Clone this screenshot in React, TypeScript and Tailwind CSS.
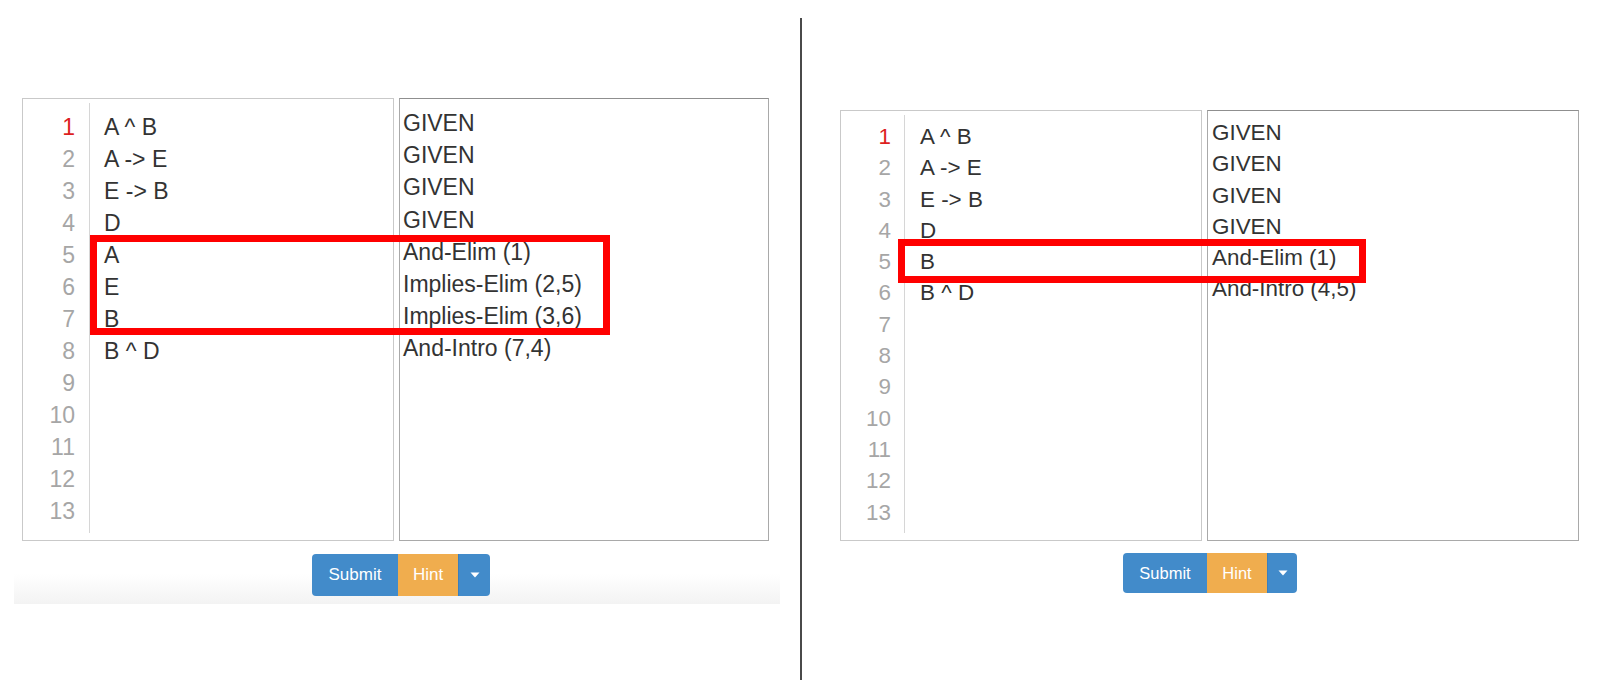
import React from 'react';

type Side = {
  formulas: string[];
  reasons: string[];
};

const leftProof: Side = {
  formulas: ['A ^ B', 'A -> E', 'E -> B', 'D', 'A', 'E', 'B', 'B ^ D'],
  reasons: ['GIVEN', 'GIVEN', 'GIVEN', 'GIVEN', 'And-Elim (1)', 'Implies-Elim (2,5)', 'Implies-Elim (3,6)', 'And-Intro (7,4)'],
};

const rightProof: Side = {
  formulas: ['A ^ B', 'A -> E', 'E -> B', 'D', 'B', 'B ^ D'],
  reasons: ['GIVEN', 'GIVEN', 'GIVEN', 'GIVEN', 'And-Elim (1)', 'And-Intro (4,5)'],
};

const lineNumbers = Array.from({ length: 13 }, (_, i) => i + 1);

const Caret = () => (
  <svg width="10" height="6" viewBox="0 0 10 6">
    <path d="M0.5 0.5 L9.5 0.5 L5 5.5 Z" fill="#fff" />
  </svg>
);

const Buttons = ({ big }: { big: boolean }) => (
  <div
    className={`flex overflow-hidden rounded-[4px] text-white font-['Liberation_Sans',Arial,sans-serif] ${
      big ? 'h-[42px] text-[17px]' : 'h-[40px] text-[16.5px]'
    }`}
  >
    <div className={`flex items-center justify-center bg-[#428bca] ${big ? 'w-[86px]' : 'w-[84px]'}`}>Submit</div>
    <div className="flex w-[60px] items-center justify-center bg-[#f0ad4e]">Hint</div>
    <div className={`flex items-center justify-center bg-[#428bca] border-l border-[#3a7fbd] ${big ? 'w-[32px]' : 'w-[30px]'}`}>
      <Caret />
    </div>
  </div>
);

const LeftHalf = () => (
  <div className="relative w-[800px] shrink-0 pt-[98px] font-['Liberation_Sans',Arial,sans-serif] text-[23px] text-[#333]">
    <div className="flex gap-[5px] pl-[22px]">
      {/* editor */}
      <div className="flex h-[443px] w-[372px] border border-[#c9c9c9] pt-[4px] pb-[7px]">
        <div className="w-[67px] border-r border-[#d6d6d6] pt-[8px] pr-[14px] text-right text-[#a6a6a6] leading-[32px]">
          {lineNumbers.map((n) => (
            <div key={n} className={n === 1 ? 'text-[#dd1f1f]' : ''}>
              {n}
            </div>
          ))}
        </div>
        <div className="pl-[14px] pt-[8px] leading-[32px]">
          {leftProof.formulas.map((f, i) => (
            <div key={i}>{f}</div>
          ))}
        </div>
      </div>
      {/* reasons */}
      <div className="h-[443px] w-[370px] border border-[#a9a9a9] border-t-[#8f8f8f] pl-[3px] pt-[8px] leading-[32.2px]">
        {leftProof.reasons.map((r, i) => (
          <div key={i}>{r}</div>
        ))}
      </div>
    </div>
    <div className="ml-[14px] mt-[13px] flex h-[50px] w-[766px] justify-center pl-[8px] bg-linear-to-b from-white from-40% to-[#f3f3f3]">
      <Buttons big />
    </div>
    <div className="absolute left-[90px] top-[235px] h-[100px] w-[520px] border-[7px] border-[#ff0000]" />
  </div>
);

const RightHalf = () => (
  <div className="relative flex-1 pt-[110px] font-['Liberation_Sans',Arial,sans-serif] text-[22.4px] text-[#333]">
    <div className="flex gap-[5px] pl-[38px]">
      <div className="flex h-[431px] w-[362px] border border-[#c9c9c9] pt-[4px] pb-[7px]">
        <div className="w-[64px] border-r border-[#d6d6d6] pt-[6px] pr-[13px] text-right text-[#a6a6a6] leading-[31.3px]">
          {lineNumbers.map((n) => (
            <div key={n} className={n === 1 ? 'text-[#dd1f1f]' : ''}>
              {n}
            </div>
          ))}
        </div>
        <div className="pl-[15px] pt-[6px] leading-[31.3px]">
          {rightProof.formulas.map((f, i) => (
            <div key={i}>{f}</div>
          ))}
        </div>
      </div>
      <div className="h-[431px] w-[372px] border border-[#a9a9a9] border-t-[#8f8f8f] pl-[4px] pt-[6px] leading-[31.3px]">
        {rightProof.reasons.map((r, i) => (
          <div key={i}>{r}</div>
        ))}
      </div>
    </div>
    <div className="mt-[12px] flex justify-start pl-[321px]">
      <Buttons big={false} />
    </div>
    <div className="absolute left-[96px] top-[239px] h-[44px] w-[468px] border-[7px] border-[#ff0000]" />
  </div>
);

export default function App() {
  return (
    <div className="flex h-[692px] w-[1600px] overflow-hidden bg-white">
      <LeftHalf />
      <div className="mt-[18px] h-[662px] w-[2px] shrink-0 bg-[#4a4a4a]" />
      <RightHalf />
    </div>
  );
}
